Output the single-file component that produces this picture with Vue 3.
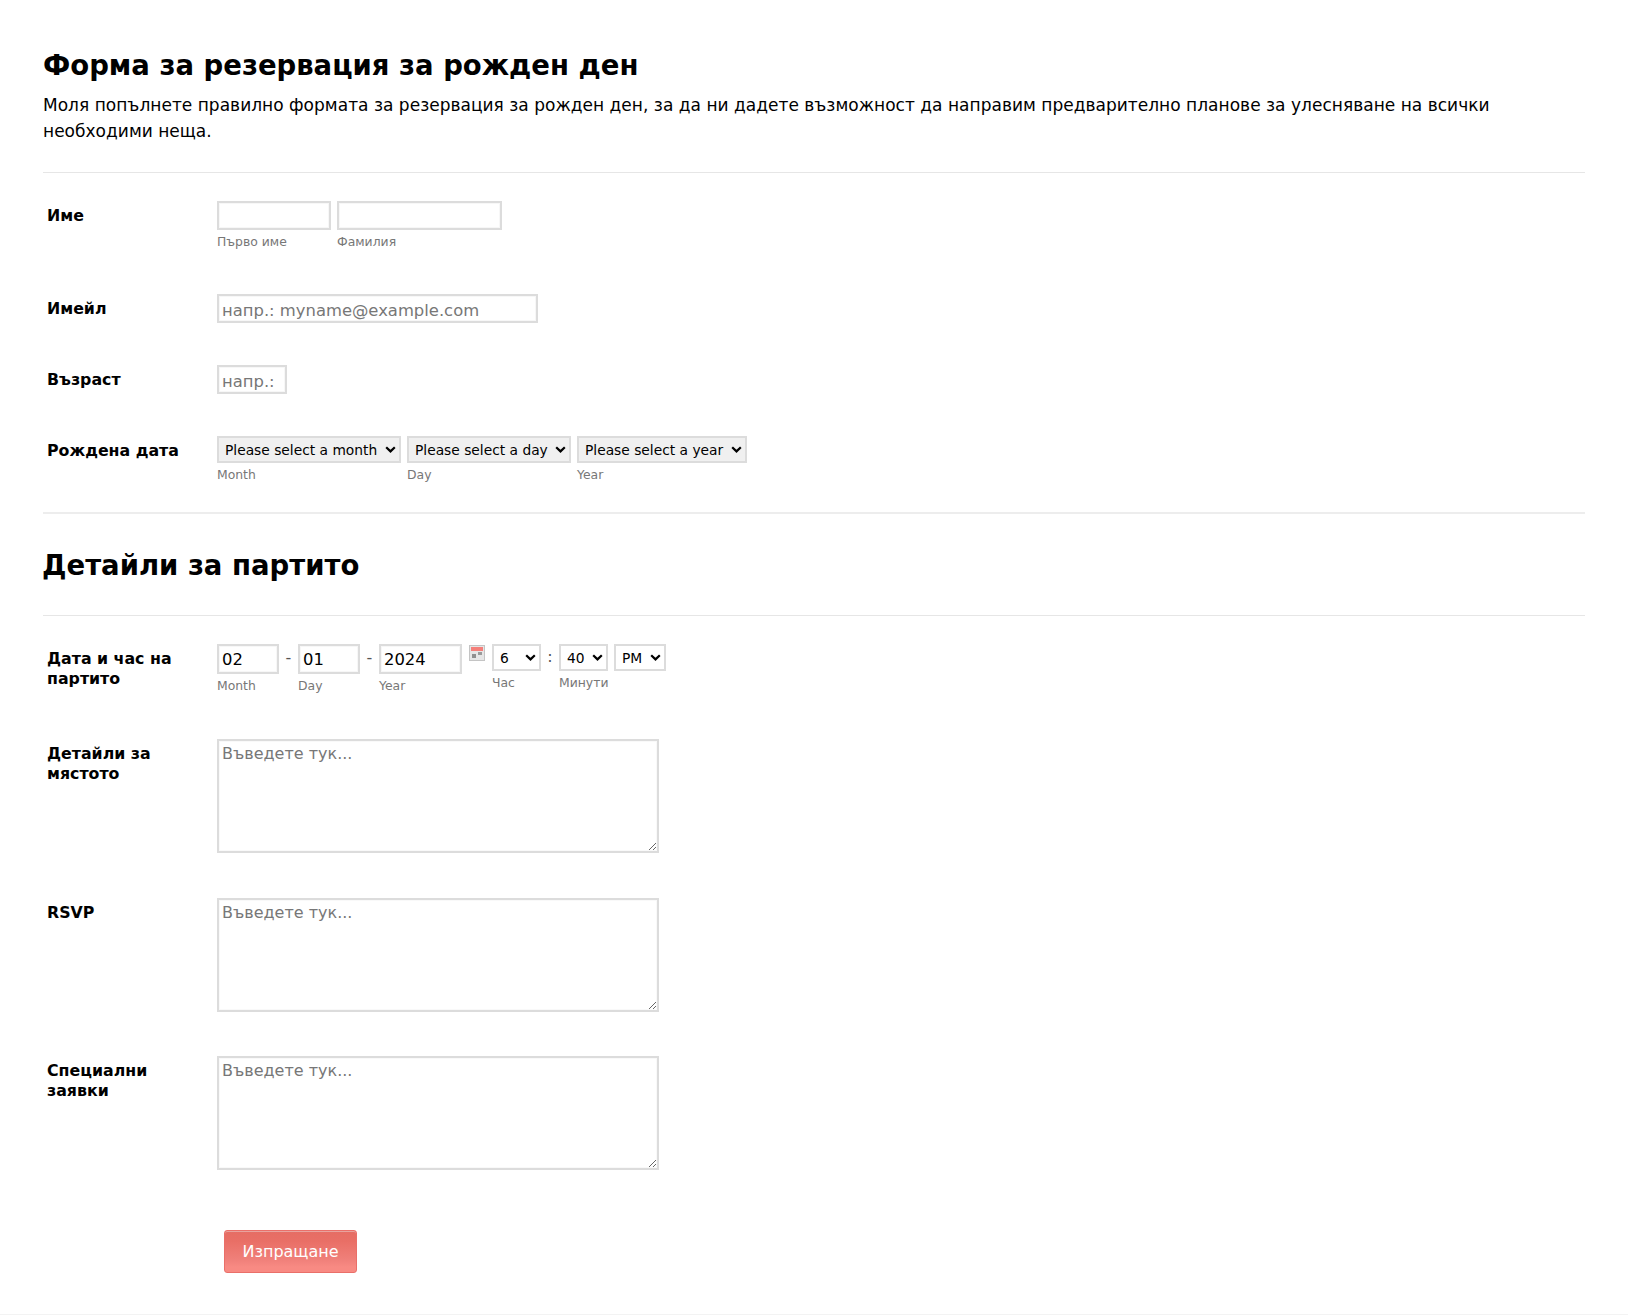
<script setup>
const months = 'Please select a month'
const days = 'Please select a day'
const years = 'Please select a year'
const areas = [
  { id: 'venue', label: 'Детайли за мястото' },
  { id: 'rsvp', label: 'RSVP' },
  { id: 'special', label: 'Специални заявки' },
]
</script>

<template>
  <div class="page">
    <form class="form" @submit.prevent>
      <div class="head">
        <h1>Форма за резервация за рожден ден</h1>
        <p>Моля попълнете правилно формата за резервация за рожден ден, за да ни дадете възможност да направим предварително планове за улесняване на всички необходими неща.</p>
      </div>

      <div class="row name-row">
        <label class="lbl">Име</label>
        <div class="fields">
          <span class="field"><input class="inp first" type="text"><small>Първо име</small></span>
          <span class="field"><input class="inp last" type="text"><small>Фамилия</small></span>
        </div>
      </div>

      <div class="row email-row">
        <label class="lbl">Имейл</label>
        <div class="fields"><input class="inp email low" type="text" placeholder="напр.: myname@example.com"></div>
      </div>

      <div class="row age-row">
        <label class="lbl">Възраст</label>
        <div class="fields"><input class="inp age low" type="text" placeholder="напр.:"></div>
      </div>

      <div class="row birth-row">
        <label class="lbl">Рождена дата</label>
        <div class="fields">
          <span class="field"><select class="sel grey s-month"><option>{{ months }}</option></select><small>Month</small></span>
          <span class="field"><select class="sel grey s-day"><option>{{ days }}</option></select><small>Day</small></span>
          <span class="field"><select class="sel grey s-year"><option>{{ years }}</option></select><small>Year</small></span>
        </div>
      </div>

      <div class="section">
        <h2>Детайли за партито</h2>
      </div>

      <div class="row when-row">
        <label class="lbl">Дата и час на партито</label>
        <div class="fields when">
          <span class="field"><input class="inp d2" type="text" value="02"><small>Month</small></span>
          <span class="dash">-</span>
          <span class="field"><input class="inp d2" type="text" value="01"><small>Day</small></span>
          <span class="dash">-</span>
          <span class="field"><input class="inp d4" type="text" value="2024"><small>Year</small></span>
          <svg class="cal" width="16" height="16" viewBox="0 0 16 16">
            <rect x="0.5" y="0.5" width="15" height="15" fill="#e6e6e6" stroke="#c4c4c4" />
            <rect x="2" y="2" width="12" height="4" fill="#f47f7a" />
            <rect x="3" y="9" width="4" height="4" fill="#8f8f8f" />
            <rect x="9" y="7" width="4" height="3" fill="#9a9a9a" />
          </svg>
          <span class="field"><select class="sel time hour"><option>6</option></select><small>Час</small></span>
          <span class="colon">:</span>
          <span class="field"><select class="sel time minute"><option>40</option></select><small>Минути</small></span>
          <span class="field"><select class="sel time ampm"><option>PM</option></select></span>
        </div>
      </div>

      <div v-for="a in areas" :key="a.id" class="row area-row">
        <label class="lbl">{{ a.label }}</label>
        <div class="fields"><textarea class="area" placeholder="Въведете тук..."></textarea></div>
      </div>

      <div class="actions">
        <button class="send" type="button">Изпращане</button>
      </div>
    </form>
  </div>
</template>

<style>
html, body { background: #fff; }
</style>

<style scoped>
.page {
  height: 1315px;
  box-sizing: border-box;
  border-bottom: 1px solid #f3f3f3;
  padding: 46px 43px 0;
  font-family: "DejaVu Sans", Verdana, sans-serif;
  color: #000;
}
.form { width: 1542px; }
.head {
  padding-bottom: 28px;
  border-bottom: 1px solid #e6e6e6;
}
h1 {
  margin: 0;
  font-size: 27.5px;
  line-height: 38px;
  font-weight: 700;
}
.head p {
  margin: 8px 0 0;
  font-size: 17px;
  line-height: 26px;
  letter-spacing: 0.02px;
}
.row {
  display: grid;
  grid-template-columns: 174px 1fr;
}
.lbl {
  padding: 5px 14px 0 4px;
  font-size: 15.8px;
  line-height: 19.5px;
  font-weight: 700;
}
.fields { display: flex; align-items: flex-start; gap: 6px; }
.field { display: flex; flex-direction: column; }
small {
  margin-top: 4px;
  font-size: 12.4px;
  line-height: 15px;
  color: #777;
}
.inp {
  box-sizing: border-box;
  height: 29px;
  padding: 0 3px;
  border: 2px solid #dcdcdc;
  border-radius: 0;
  outline: none;
  background: #fff;
  box-shadow: inset 0 0 0 1px #f7f7f7;
  font: 16.4px "DejaVu Sans", Verdana, sans-serif;
  color: #000;
}
.low { padding-top: 4px; }
.inp::placeholder, .area::placeholder { color: #777; opacity: 1; }
.first { width: 114px; }
.last { width: 165px; }
.email { width: 321px; }
.age { width: 70px; }
.d2 { width: 62px; height: 30px; }
.d4 { width: 83px; height: 30px; }
.sel {
  appearance: none;
  box-sizing: border-box;
  height: 27px;
  padding: 0 0 0 6px;
  border: 2px solid #dcdcdc;
  border-radius: 0;
  outline: none;
  background-color: #fff;
  background-image: url("data:image/svg+xml,%3Csvg xmlns='http://www.w3.org/2000/svg' width='11' height='7' viewBox='0 0 11 7'%3E%3Cpath d='M1.2 1.2 5.5 5.4 9.8 1.2' fill='none' stroke='%23000' stroke-width='2.2'/%3E%3C/svg%3E");
  background-repeat: no-repeat;
  background-position: right 3px center;
  font: 13.8px "DejaVu Sans", Verdana, sans-serif;
  color: #000;
}
.grey { background-color: #f0f0f0; }
.s-month { width: 184px; }
.s-day { width: 164px; }
.s-year { width: 170px; }
.name-row { margin-top: 28px; height: 93px; }
.email-row { height: 71px; }
.age-row { height: 71px; }
.birth-row { height: 76px; }
.section {
  border-top: 2px solid #ededed;
  border-bottom: 1px solid #e6e6e6;
  height: 104px;
  box-sizing: border-box;
  padding-top: 33px;
}
h2 {
  margin: 0 0 0 -1px;
  font-size: 27.5px;
  line-height: 36px;
  font-weight: 700;
}
.when-row { margin-top: 28px; height: 95px; }
.when { gap: 0; }
.dash, .colon { width: 19px; text-align: center; font-size: 16px; line-height: 28px; color: #555; }
.cal { margin: 1px 7px 0 7px; flex: none; }
.time { width: 49px; padding-left: 6px; }
.colon { width: 18px; line-height: 26px; }
.minute { margin-right: 6px; }
.ampm { width: 52px; }
.area-row { height: 158.6px; }
.area {
  display: block;
  box-sizing: border-box;
  width: 442px;
  height: 114px;
  padding: 3px;
  border: 2px solid #dcdcdc;
  border-radius: 0;
  outline: none;
  background: #fff;
  box-shadow: inset 0 0 0 1px #f9f9f9;
  font: 16px/1.25 "DejaVu Sans", Verdana, sans-serif;
}
.actions { margin-top: 15px; padding-left: 181px; }
.send {
  display: block;
  box-sizing: border-box;
  width: 133px;
  height: 43px;
  padding: 0;
  border: 1px solid #ea6f69;
  border-radius: 3px;
  background: linear-gradient(#e56d64, #e96f66 25%, #f0807a 70%, #f88a83 88%);
  box-shadow: inset 0 1px 0 #e8a39e;
  font: 16px "DejaVu Sans", Verdana, sans-serif;
  color: #fff;
}
</style>
